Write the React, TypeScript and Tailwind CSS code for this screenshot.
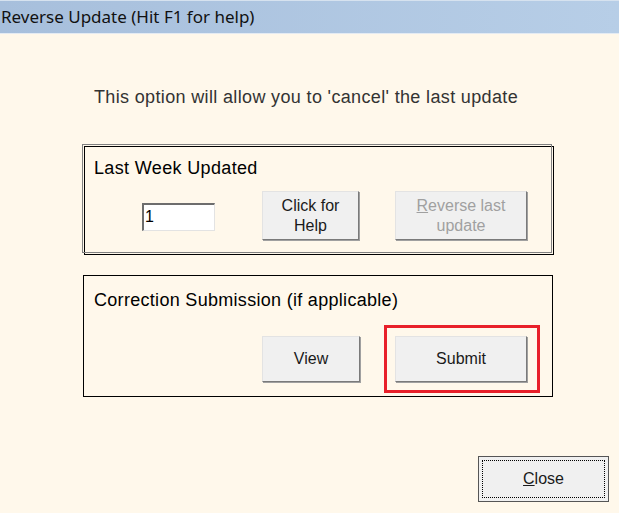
import React from "react";

const sans = { fontFamily: '"Liberation Sans", Arial, sans-serif' };

function Btn({
  children,
  w,
  h,
  disabled,
}: {
  children: React.ReactNode;
  w: string;
  h: string;
  disabled?: boolean;
}) {
  return (
    <div
      className={`${w} ${h} flex items-center justify-center text-center bg-[#f0f0f0] border border-t-[#e3e3e3] border-l-[#e3e3e3] border-r-[#7a7a7a] border-b-[#7a7a7a] shadow-[1px_1px_0_0_#a0a0a0] text-[16px] leading-[20px] ${
        disabled ? "text-[#a0a0a0]" : "text-[#1a1a1a]"
      }`}
      style={sans}
    >
      {children}
    </div>
  );
}

export default function App() {
  return (
    <div className="w-[619px] h-[513px] bg-[#fff8eb] flex flex-col overflow-hidden">
      <div className="h-[34px] flex flex-col shrink-0">
        <div className="h-[1px] bg-[#d6e2ef]" />
        <div
          className="h-[32px] flex items-center pl-[1px] bg-gradient-to-r from-[#a7bfdc] to-[#b7cee7] text-[17px] text-[#111]"
          style={{ fontFamily: '"Noto Sans", "Open Sans", sans-serif' }}
        >
          Reverse Update (Hit F1 for help)
        </div>
        <div className="h-[1px] bg-[#e4ebf3]" />
      </div>

      <div
        className="mt-[52px] ml-[94px] text-[18px] leading-[22px] tracking-[0.35px] text-[#333]"
        style={sans}
      >
        This option will allow you to 'cancel' the last update
      </div>

      <div className="relative mt-[38px] ml-[84px] w-[470px] h-[109px] border border-black">
        <div className="absolute -left-[3px] -top-[3px] w-[470px] h-[109px] border border-[#808080] pointer-events-none" />
        <div
          className="pl-[9px] pt-[10px] text-[18px] leading-[22px] tracking-[0.35px] text-black"
          style={sans}
        >
          Last Week Updated
        </div>
        <div className="flex items-start mt-[12px]">
          <div
            className="mt-[12px] ml-[57px] w-[73px] h-[28px] bg-white border-t-2 border-l-2 border-t-[#6d6d6d] border-l-[#6d6d6d] border-r border-b border-r-[#e3e3e3] border-b-[#e3e3e3] text-[16px] leading-[24px] pl-[1px] text-black"
            style={sans}
          >
            1
          </div>
          <div className="ml-[47px]">
            <Btn w="w-[97px]" h="h-[49px]">
              Click for
              <br />
              Help
            </Btn>
          </div>
          <div className="ml-[36px]">
            <Btn w="w-[132px]" h="h-[49px]" disabled>
              <span>
                <span className="underline">R</span>everse last
                <br />
                update
              </span>
            </Btn>
          </div>
        </div>
      </div>

      <div className="mt-[20px] ml-[83px] w-[470px] h-[122px] border border-black">
        <div
          className="pl-[10px] pt-[13px] text-[18px] leading-[22px] tracking-[0.3px] text-black"
          style={sans}
        >
          Correction Submission (if applicable)
        </div>
        <div className="flex items-center mt-[25px]">
          <div className="ml-[178px]">
            <Btn w="w-[98px]" h="h-[46px]">
              View
            </Btn>
          </div>
          <div className="ml-[24px] pt-[8px] pb-[8px] pl-[8px] pr-[10px] -my-[11px] border-[3px] border-[#e8202a]">
            <Btn w="w-[132px]" h="h-[46px]">
              Submit
            </Btn>
          </div>
        </div>
      </div>

      <div className="flex justify-end mt-[59px] pr-[10px]">
        <div className="w-[131px] h-[46px] border border-[#555] bg-[#f0f0f0] p-[3px]">
          <div
            className="w-full h-full border border-dotted border-black flex items-center justify-center text-[16px] text-[#1a1a1a]"
            style={sans}
          >
            <span>
              <span className="underline">C</span>lose
            </span>
          </div>
        </div>
      </div>
    </div>
  );
}
